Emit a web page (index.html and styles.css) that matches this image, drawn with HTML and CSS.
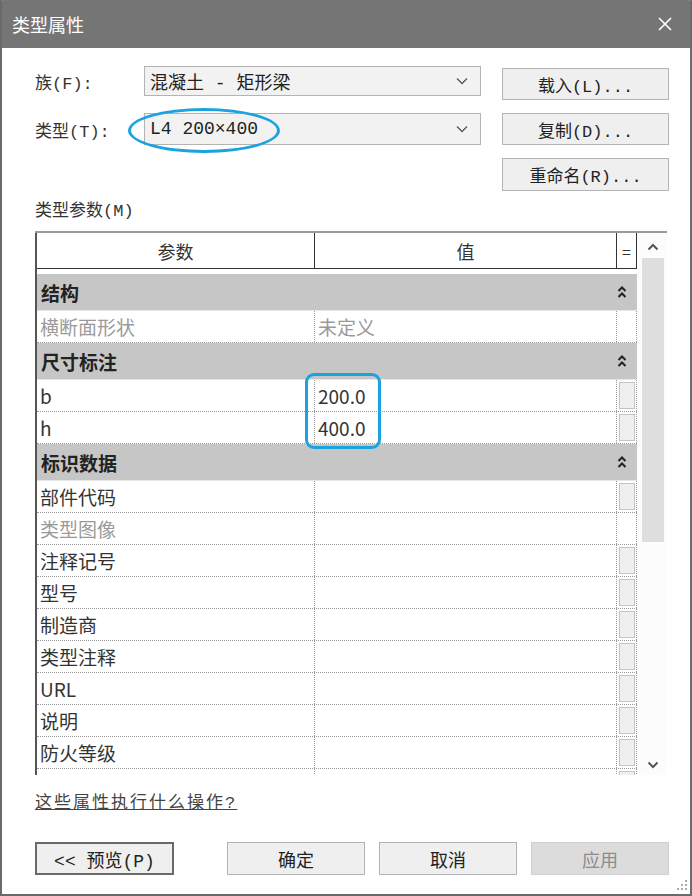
FILE: index.html
```html
<!DOCTYPE html>
<html lang="zh-CN">
<head>
    <meta charset="UTF-8">
    <title>类型属性</title>
    <link rel="stylesheet" href="styles.css">
</head>
<body>

    <div class="dialog">
        <div class="titlebar">
            <span class="title">类型属性</span>
            <svg class="close" width="16" height="16" viewBox="0 0 16 16">
                <path d="M2 2 L14 14 M14 2 L2 14" stroke="#fff" stroke-width="1.6" fill="none"/>
            </svg>
        </div>

        <div class="content">
            <!-- family / type selectors and the buttons beside them -->
            <div class="top">
                <div class="fields">
                    <div class="field">
                        <label class="label">族(F):</label>
                        <div class="combo">
                            <span>混凝土 - 矩形梁</span>
                            <svg class="arrow" width="12" height="8" viewBox="0 0 12 8"><path d="M1 1.5 L6 6.5 L11 1.5" stroke="#555" stroke-width="1.3" fill="none"/></svg>
                        </div>
                    </div>
                    <div class="field second">
                        <label class="label">类型(T):</label>
                        <div class="combo tall">
                            <span>L4 200×400</span>
                            <svg class="arrow" width="12" height="8" viewBox="0 0 12 8"><path d="M1 1.5 L6 6.5 L11 1.5" stroke="#555" stroke-width="1.3" fill="none"/></svg>
                        </div>
                    </div>
                </div>
                <div class="actions">
                    <button class="btn">载入(L)...</button>
                    <button class="btn">复制(D)...</button>
                    <button class="btn">重命名(R)...</button>
                </div>
            </div>

            <div class="section-label">类型参数(M)</div>

            <!-- parameter table -->
            <div class="table">
                <div class="grid">
                    <div class="row head">
                        <div class="cell">参数</div>
                        <div class="cell">值</div>
                        <div class="cell eq">=</div>
                    </div>
                    <div class="gap"></div>

                    <div class="group">
                        <span>结构</span>
                        <svg class="fold" width="10" height="13" viewBox="0 0 10 13"><path d="M1.5 5 L5 1.5 L8.5 5 M1.5 11 L5 7.5 L8.5 11" stroke="#222" stroke-width="2" fill="none"/></svg>
                    </div>
                    <div class="row data">
                        <div class="cell muted">横断面形状</div>
                        <div class="cell muted">未定义</div>
                        <div class="cell eq"></div>
                    </div>

                    <div class="group">
                        <span>尺寸标注</span>
                        <svg class="fold" width="10" height="13" viewBox="0 0 10 13"><path d="M1.5 5 L5 1.5 L8.5 5 M1.5 11 L5 7.5 L8.5 11" stroke="#222" stroke-width="2" fill="none"/></svg>
                    </div>
                    <div class="row data">
                        <div class="cell">b</div>
                        <div class="cell">200.0</div>
                        <div class="cell eq"><i class="box"></i></div>
                    </div>
                    <div class="row data">
                        <div class="cell">h</div>
                        <div class="cell">400.0</div>
                        <div class="cell eq"><i class="box"></i></div>
                    </div>

                    <div class="group">
                        <span>标识数据</span>
                        <svg class="fold" width="10" height="13" viewBox="0 0 10 13"><path d="M1.5 5 L5 1.5 L8.5 5 M1.5 11 L5 7.5 L8.5 11" stroke="#222" stroke-width="2" fill="none"/></svg>
                    </div>
                    <div class="row data">
                        <div class="cell">部件代码</div>
                        <div class="cell"></div>
                        <div class="cell eq"><i class="box"></i></div>
                    </div>
                    <div class="row data">
                        <div class="cell muted">类型图像</div>
                        <div class="cell"></div>
                        <div class="cell eq"></div>
                    </div>
                    <div class="row data">
                        <div class="cell">注释记号</div>
                        <div class="cell"></div>
                        <div class="cell eq"><i class="box"></i></div>
                    </div>
                    <div class="row data">
                        <div class="cell">型号</div>
                        <div class="cell"></div>
                        <div class="cell eq"><i class="box"></i></div>
                    </div>
                    <div class="row data">
                        <div class="cell">制造商</div>
                        <div class="cell"></div>
                        <div class="cell eq"><i class="box"></i></div>
                    </div>
                    <div class="row data">
                        <div class="cell">类型注释</div>
                        <div class="cell"></div>
                        <div class="cell eq"><i class="box"></i></div>
                    </div>
                    <div class="row data">
                        <div class="cell">URL</div>
                        <div class="cell"></div>
                        <div class="cell eq"><i class="box"></i></div>
                    </div>
                    <div class="row data">
                        <div class="cell">说明</div>
                        <div class="cell"></div>
                        <div class="cell eq"><i class="box"></i></div>
                    </div>
                    <div class="row data">
                        <div class="cell">防火等级</div>
                        <div class="cell"></div>
                        <div class="cell eq"><i class="box"></i></div>
                    </div>
                    <div class="row data">
                        <div class="cell"></div>
                        <div class="cell"></div>
                        <div class="cell eq"><i class="box"></i></div>
                    </div>
                </div>

                <div class="scroll">
                    <svg class="sarrow" width="12" height="8" viewBox="0 0 12 8"><path d="M1.5 6.5 L6 2 L10.5 6.5" stroke="#555" stroke-width="2" fill="none"/></svg>
                    <div class="track"><div class="thumb"></div></div>
                    <svg class="sarrow" width="12" height="8" viewBox="0 0 12 8"><path d="M1.5 1.5 L6 6 L10.5 1.5" stroke="#555" stroke-width="2" fill="none"/></svg>
                </div>
            </div>

            <a class="help" href="#">这些属性执行什么操作?</a>

            <div class="footer">
                <button class="btn default">&lt;&lt; 预览(P)</button>
                <div class="footer-right">
                    <button class="btn">确定</button>
                    <button class="btn">取消</button>
                    <button class="btn disabled">应用</button>
                </div>
            </div>
        </div>

        <!-- blue annotation marks drawn over the dialog -->
        <div class="mark-ellipse"></div>
        <div class="mark-box"></div>

        <svg class="grip" width="12" height="12" viewBox="0 0 12 12" fill="#aaa">
            <rect x="9" y="1" width="2" height="2"/>
            <rect x="5" y="5" width="2" height="2"/><rect x="9" y="5" width="2" height="2"/>
            <rect x="1" y="9" width="2" height="2"/><rect x="5" y="9" width="2" height="2"/><rect x="9" y="9" width="2" height="2"/>
        </svg>
    </div>

</body>
</html>
```

FILE: styles.css
```css
/* General reset */
* {
    margin: 0;
    padding: 0;
    box-sizing: border-box;
}

body {
    font-family: "Noto Sans CJK SC", sans-serif;
    background: #fff;
    color: #333;
}

.dialog {
    position: relative;
    width: 692px;
    height: 896px;
    background: #fff;
    border-left: 2px solid #6a6a6a;
    border-right: 2px solid #6a6a6a;
    border-bottom: 2px solid #6a6a6a;
    overflow: hidden;
}

.titlebar {
    height: 48px;
    background: #757575;
    margin: 0 -2px;
    display: flex;
    align-items: center;
    justify-content: space-between;
    padding: 0 19px 0 12px;
    border-radius: 4px 4px 0 0;
}

.title {
    color: #fff;
    font-size: 18px;
}

.content {
    padding: 0 21px 0 33px;
}

/* selectors */
.top {
    display: flex;
    padding-top: 18px;
}

.fields {
    width: 446px;
}

.field {
    display: flex;
    align-items: center;
    height: 30px;
}

.field.second {
    margin-top: 17px;
    height: 32px;
}

.label {
    width: 109px;
    font-family: "Liberation Mono", "Noto Sans CJK SC", monospace;
    font-size: 17px;
    color: #333;
}

.combo {
    flex: 1;
    height: 100%;
    display: flex;
    align-items: center;
    justify-content: space-between;
    padding: 0 12px 0 5px;
    background: #f2f2f2;
    border: 1px solid #b4b4b4;
    font-family: "Liberation Mono", "Noto Sans CJK SC", monospace;
    font-size: 18px;
    color: #222;
}

.actions {
    margin-left: 21px;
    padding-top: 2px;
    width: 167px;
    display: flex;
    flex-direction: column;
    gap: 13px;
}

.btn {
    height: 32px;
    background: #efefef;
    border: 1px solid #b4b4b4;
    font-family: "Liberation Mono", "Noto Sans CJK SC", monospace;
    font-size: 17px;
    color: #222;
    cursor: pointer;
}

.actions .btn:last-child {
    height: 33px;
}

.section-label {
    margin-top: 10px;
    line-height: 22px;
    font-family: "Liberation Mono", "Noto Sans CJK SC", monospace;
    font-size: 17px;
    color: #333;
}

/* parameter table */
.table {
    margin-top: 8px;
    width: 632px;
    height: 544px;
    display: flex;
    border-top: 2px solid #9a9a9a;
    overflow: hidden;
}

.grid {
    width: 602px;
    border-left: 2px solid #555;
}

.row {
    display: grid;
    grid-template-columns: 278px 302px 20px;
}

.head {
    height: 36px;
    border-bottom: 1px solid #333;
}

.head .cell {
    display: flex;
    align-items: center;
    justify-content: center;
    font-size: 18px;
    color: #333;
    border-right: 1px solid #333;
}

.head .eq {
    font-size: 16px;
}

.gap {
    height: 5px;
}

.group {
    height: 37px;
    background: #c6c6c6;
    display: flex;
    align-items: center;
    justify-content: space-between;
    padding: 0 10px 0 4px;
    font-size: 19px;
    font-weight: bold;
    color: #222;
    border-bottom: 1px solid #e6e6e6;
}

.data {
    height: 32px;
    border-bottom: 1px dotted #999;
}

.data .cell {
    display: flex;
    align-items: center;
    padding-left: 3px;
    font-size: 19px;
    color: #333;
    border-right: 1px dotted #999;
}

.data .cell.muted {
    color: #9a9a9a;
}

.data .eq {
    padding: 2px 1px 2px 2px;
}

.box {
    display: block;
    width: 100%;
    height: 100%;
    background: #efefef;
    border: 1px solid #c4c4c4;
}

/* scrollbar */
.scroll {
    width: 30px;
    display: flex;
    flex-direction: column;
    align-items: center;
    padding: 10px 0 6px 2px;
    background: #fcfcfc;
}

.sarrow {
    flex: none;
}

.track {
    flex: 1;
    width: 22px;
    padding: 7px 0;
}

.thumb {
    height: 284px;
    background: #dedede;
}

.help {
    display: inline-block;
    margin-top: 18px;
    line-height: 22px;
    font-family: "Liberation Mono", "Noto Sans CJK SC", monospace;
    font-size: 17px;
    letter-spacing: 2px;
    color: #444;
    text-decoration: underline;
}

.footer {
    display: flex;
    margin-top: 27px;
}

.footer .btn {
    height: 33px;
    width: 138px;
    font-size: 18px;
}

.footer .default {
    width: 139px;
    border: 2px solid #6a6a6a;
}

.footer-right {
    margin-left: auto;
    display: flex;
    gap: 14px;
}

.btn.disabled {
    background: #dcdcdc;
    border-color: #d0d0d0;
    color: #8c8c8c;
}

/* annotation marks */
.mark-ellipse {
    position: absolute;
    left: 126px;
    top: 108px;
    width: 152px;
    height: 45px;
    border: 3px solid #1aa3de;
    border-radius: 50%;
}

.mark-box {
    position: absolute;
    left: 303px;
    top: 373px;
    width: 76px;
    height: 76px;
    border: 3px solid #1aa3de;
    border-radius: 9px;
}

.grip {
    position: absolute;
    right: 2px;
    bottom: 3px;
}
```
